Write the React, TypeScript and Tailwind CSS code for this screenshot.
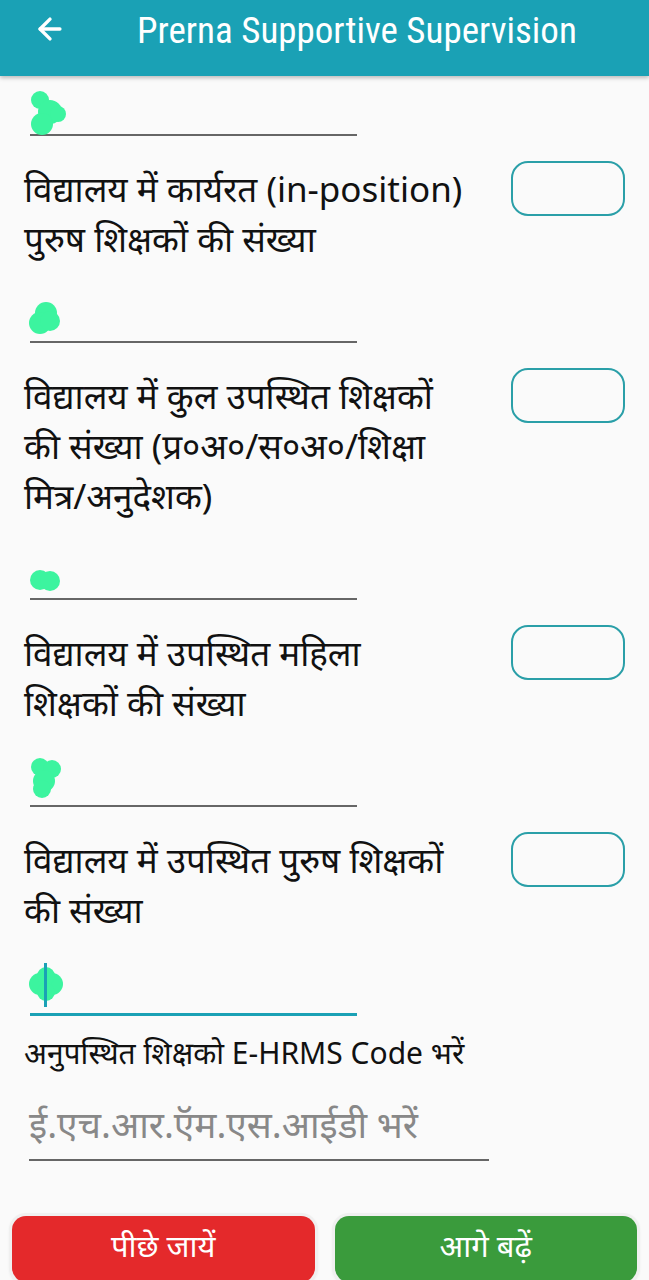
import { ArrowLeft } from 'lucide-react';

const FONT = { fontFamily: '"Noto Sans", "Liberation Sans", sans-serif' };

type Blob = { w: number; h: number; circles: [number, number, number][] };

const BLOBS: Blob[] = [
  { w: 40, h: 46, circles: [[12, 10, 9], [22, 22, 12], [14, 34, 11], [30, 24, 8]] },
  { w: 36, h: 36, circles: [[18, 12, 11], [12, 22, 11], [22, 20, 10]] },
  { w: 34, h: 24, circles: [[12, 12, 10], [22, 13, 10]] },
  { w: 36, h: 42, circles: [[12, 10, 9], [24, 12, 9], [16, 24, 11], [14, 32, 9]] },
  { w: 38, h: 38, circles: [[12, 20, 11], [24, 20, 11], [18, 12, 9], [18, 28, 9]] },
];

function GreenBlob({ blob }: { blob: Blob }) {
  return (
    <svg width={blob.w} height={blob.h} viewBox={`0 0 ${blob.w} ${blob.h}`}>
      {blob.circles.map(([cx, cy, r], i) => (
        <circle key={i} cx={cx} cy={cy} r={r} fill="#3cf49f" />
      ))}
    </svg>
  );
}

function BlobField({ blob, top, active }: { blob: Blob; top: number; active?: boolean }) {
  return (
    <div
      className={
        active
          ? 'ml-[30px] w-[327px] h-[56px] border-b-[3px] border-[#1aa1b5]'
          : 'ml-[30px] w-[327px] h-[54px] border-b-2 border-[#666666]'
      }
    >
      <div className="relative -ml-[2px]" style={{ paddingTop: top }}>
        <GreenBlob blob={blob} />
        {active && <div className="absolute left-[16px] top-[3px] w-[3px] h-[44px] bg-[#1aa1b5]" />}
      </div>
    </div>
  );
}

function QuestionRow({ lines }: { lines: string[] }) {
  return (
    <div className="mt-[25px] flex justify-between pl-[24px] pr-[24px]">
      <div className="text-[35px] leading-[50px] text-[#111] whitespace-nowrap pt-[3px]" style={FONT}>
        {lines.map((l, i) => (
          <div key={i}>{l}</div>
        ))}
      </div>
      <div className="w-[114px] h-[55px] shrink-0 rounded-[17px] border-2 border-[#2a9fa8] bg-[#fafafa]" />
    </div>
  );
}

const QUESTIONS: { lines: string[]; blob: number; top: number }[] = [
  { lines: ['विद्यालय में कार्यरत (in-position)', 'पुरुष शिक्षकों की संख्या'], blob: 1, top: 12 },
  { lines: ['विद्यालय में कुल उपस्थित शिक्षकों', 'की संख्या (प्र०अ०/स०अ०/शिक्षा', 'मित्र/अनुदेशक)'], blob: 2, top: 22 },
  { lines: ['विद्यालय में उपस्थित महिला', 'शिक्षकों की संख्या'], blob: 3, top: 4 },
  { lines: ['विद्यालय में उपस्थित पुरुष शिक्षकों', 'की संख्या'], blob: 4, top: 0 },
];

export default function App() {
  return (
    <div className="w-[649px] h-[1280px] overflow-hidden bg-[#fafafa]">
      <header className="h-[76px] bg-[#1aa1b5] flex items-center shadow-[0_2px_4px_rgba(0,0,0,0.25)] relative z-10">
        <div className="w-[137px] h-full flex items-start pt-[12px] pl-[33px]">
          <ArrowLeft size={34} color="#ffffff" strokeWidth={2.4} />
        </div>
        <h1
          className="text-white text-[37px] leading-none -mt-[16px]"
          style={{ fontFamily: '"Liberation Sans Narrow", "Roboto Condensed", "Liberation Sans", sans-serif' }}
        >
          Prerna Supportive Supervision
        </h1>
      </header>

      <div className="pt-[6px]">
        <BlobField blob={BLOBS[0]} top={8} />
        {QUESTIONS.map((q, i) => (
          <div key={i}>
            <QuestionRow lines={q.lines} />
            {i < QUESTIONS.length - 1 ? (
              <div className="mt-[25px]">
                <BlobField blob={BLOBS[q.blob]} top={q.top} />
              </div>
            ) : (
              <div className="mt-[25px]">
                <BlobField blob={BLOBS[q.blob]} top={4} active />
              </div>
            )}
          </div>
        ))}

        <div className="mt-[20px] pl-[24px] text-[30px] leading-[34px] text-[#111] whitespace-nowrap" style={FONT}>
          अनुपस्थित शिक्षको E-HRMS Code भरें
        </div>
        <div className="mt-[27px] ml-[29px] w-[460px] h-[64px] pt-[5px] border-b-2 border-[#666666] text-[37px] leading-[44px] text-[#888] whitespace-nowrap" style={FONT}>
          ई.एच.आर.ऍम.एस.आईडी भरें
        </div>

        <div className="mt-[55px] flex gap-[20px] px-[12px]">
          <button
            className="flex-1 h-[66px] rounded-[14px] bg-[#e4292b] text-white text-[31px] shadow-[0_0_0_3px_#f0f0f0,0_1px_4px_rgba(0,0,0,0.3)] pb-[8px]"
            style={FONT}
          >
            पीछे जायें
          </button>
          <button
            className="flex-1 h-[66px] rounded-[14px] bg-[#3a9b3c] text-white text-[31px] shadow-[0_0_0_3px_#f0f0f0,0_1px_4px_rgba(0,0,0,0.3)] pb-[8px]"
            style={FONT}
          >
            आगे बढ़ें
          </button>
        </div>
      </div>
    </div>
  );
}
